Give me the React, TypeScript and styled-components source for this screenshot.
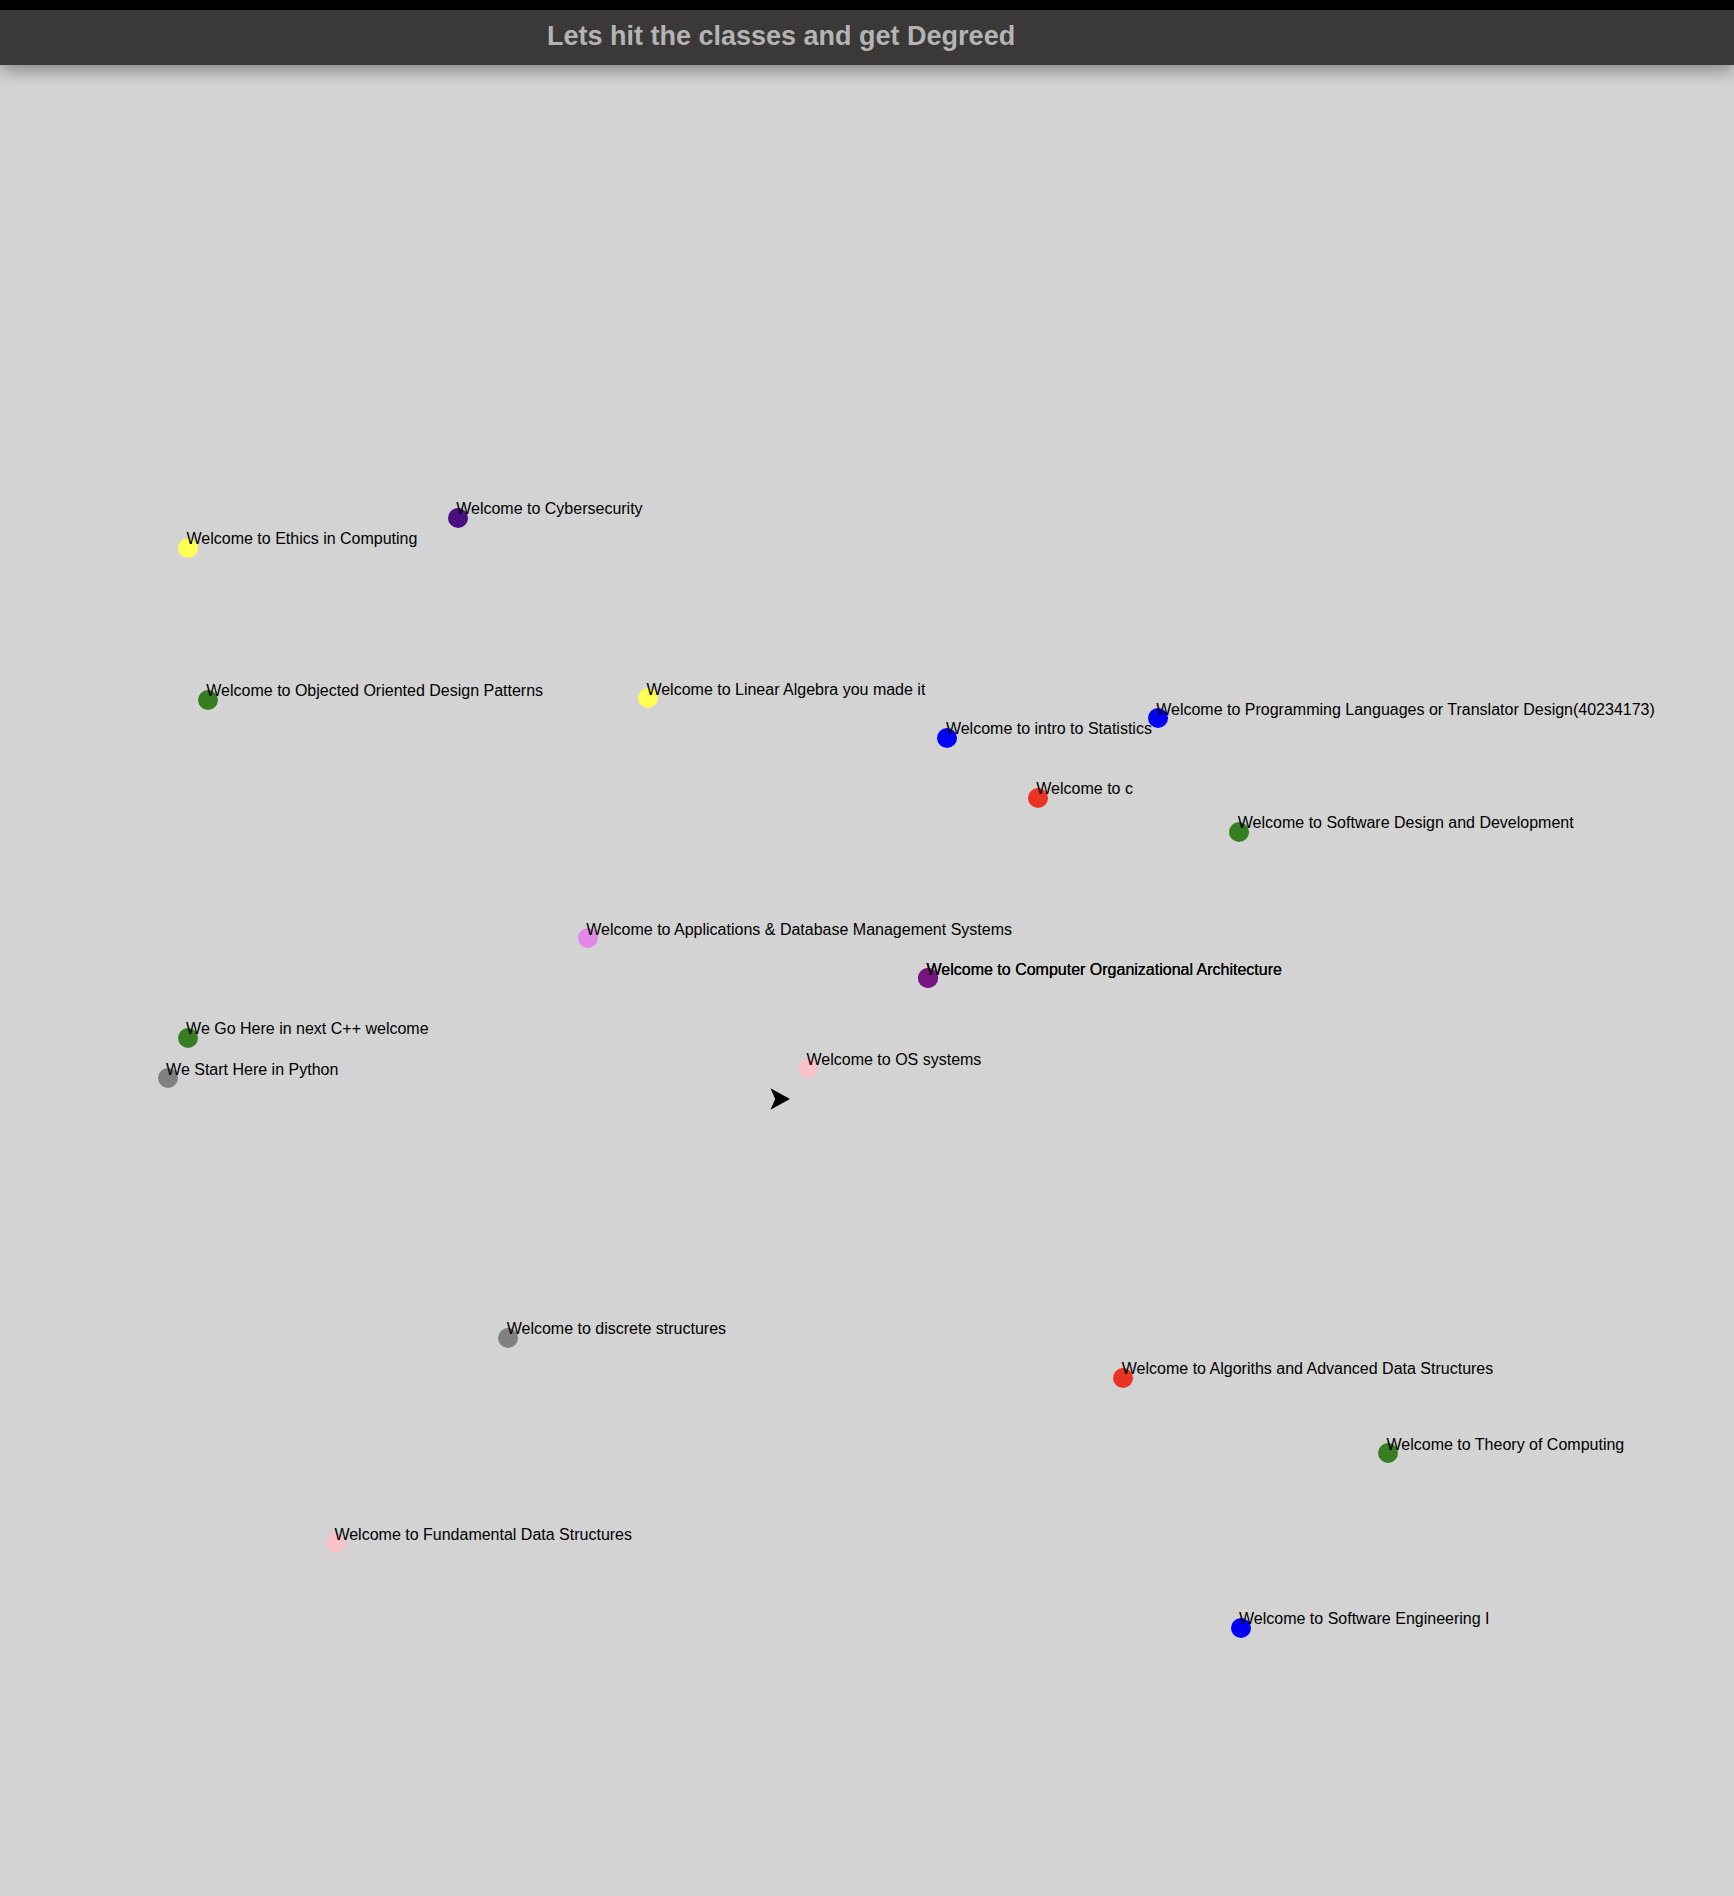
import React from "react";
import styled, { createGlobalStyle } from "styled-components";

const GlobalStyle = createGlobalStyle`
  html, body {
    margin: 0;
    padding: 0;
    background: #d3d3d3;
  }
  body {
    font-family: "Liberation Sans", Arial, sans-serif;
  }
`;

const Page = styled.div`
  min-height: 1896px;
  display: flex;
  flex-direction: column;
  background: #d3d3d3;
  overflow: hidden;
`;

const TopStrip = styled.div`
  height: 10px;
  background: #000;
  flex: none;
`;

const Header = styled.header`
  height: 55px;
  box-sizing: border-box;
  padding-bottom: 3px;
  flex: none;
  display: flex;
  align-items: center;
  padding-left: 547px;
  background: #3a3937;
  box-shadow: 0 4px 18px rgba(0, 0, 0, 0.42);
  position: relative;
  z-index: 1;
`;

const Title = styled.h1`
  margin: 0;
  font-family: "Liberation Sans", Arial, sans-serif;
  font-weight: 700;
  font-size: 27px;
  line-height: 30px;
  color: #b4b4b4;
  white-space: nowrap;
`;

const CANVAS_TOP = 65;

const Canvas = styled.main`
  position: relative;
  flex: 1;
  height: 1831px;
`;

const Node = styled.div`
  position: absolute;
  width: 20px;
  height: 20px;
`;

const Dot = styled.div<{ $color: string }>`
  width: 20px;
  height: 20px;
  border-radius: 50%;
  background: ${(p) => p.$color};
`;

const Label = styled.span`
  position: absolute;
  left: 8.5px;
  top: -7.3px;
  font-family: "Liberation Sans", Arial, sans-serif;
  font-size: 16px;
  line-height: 18px;
  color: #000;
  white-space: nowrap;
`;

const Arrow = styled.svg`
  position: absolute;
  width: 20px;
  height: 22px;
`;

const C = {
  red: "#ea3323",
  green: "#377e22",
  blue: "#0000f5",
  yellow: "#ffff54",
  indigo: "#4a0e81",
  purple: "#76157f",
  violet: "#e189e9",
  pink: "#f7c2cb",
  gray: "#808080",
};

type Course = { x: number; y: number; color: string; label: string };

const courses: Course[] = [
  { x: 457.7, y: 517.7, color: C.indigo, label: "Welcome to Cybersecurity" },
  { x: 188, y: 547.7, color: C.yellow, label: "Welcome to Ethics in Computing" },
  { x: 207.8, y: 699.5, color: C.green, label: "Welcome to Objected Oriented Design Patterns" },
  { x: 647.9, y: 698, color: C.yellow, label: "Welcome to Linear Algebra you made it" },
  { x: 1157.7, y: 718.3, color: C.blue, label: "Welcome to Programming Languages or Translator Design(40234173)" },
  { x: 947.4, y: 737.7, color: C.blue, label: "Welcome to intro to Statistics" },
  { x: 1037.8, y: 797.7, color: C.red, label: "Welcome to c" },
  { x: 1239.3, y: 831.7, color: C.green, label: "Welcome to Software Design and Development" },
  { x: 587.8, y: 938, color: C.violet, label: "Welcome to Applications & Database Management Systems" },
  { x: 928, y: 978, color: C.purple, label: "Welcome to Computer Organizational Architecture" },
  { x: 928, y: 978, color: C.purple, label: "Welcome to Computer Organizational Architecture" },
  { x: 187.6, y: 1037.7, color: C.green, label: "We Go Here in next C++ welcome" },
  { x: 167.6, y: 1078, color: C.gray, label: "We Start Here in Python" },
  { x: 808, y: 1068, color: C.pink, label: "Welcome to OS systems" },
  { x: 508.2, y: 1337.7, color: C.gray, label: "Welcome to discrete structures" },
  { x: 1123.3, y: 1377.7, color: C.red, label: "Welcome to Algoriths and Advanced Data Structures" },
  { x: 1388, y: 1453.3, color: C.green, label: "Welcome to Theory of Computing" },
  { x: 335.9, y: 1543.3, color: C.pink, label: "Welcome to Fundamental Data Structures" },
  { x: 1240.5, y: 1627.7, color: C.blue, label: "Welcome to Software Engineering I" },
];

export default function App() {
  return (
    <>
      <GlobalStyle />
      <Page>
        <TopStrip />
        <Header>
          <Title>Lets hit the classes and get Degreed</Title>
        </Header>
        <Canvas>
          {courses.map((c, i) => (
            <Node key={i} style={{ left: c.x - 10, top: c.y - 10 - CANVAS_TOP }}>
              <Dot $color={c.color} />
              <Label>{c.label}</Label>
            </Node>
          ))}
          <Arrow
            viewBox="0 0 20 22"
            style={{ left: 770, top: 1088 - CANVAS_TOP }}
          >
            <path d="M0.5 0.3 L20 11 L0.5 21.7 L5.2 11 Z" fill="#000" />
          </Arrow>
        </Canvas>
      </Page>
    </>
  );
}
